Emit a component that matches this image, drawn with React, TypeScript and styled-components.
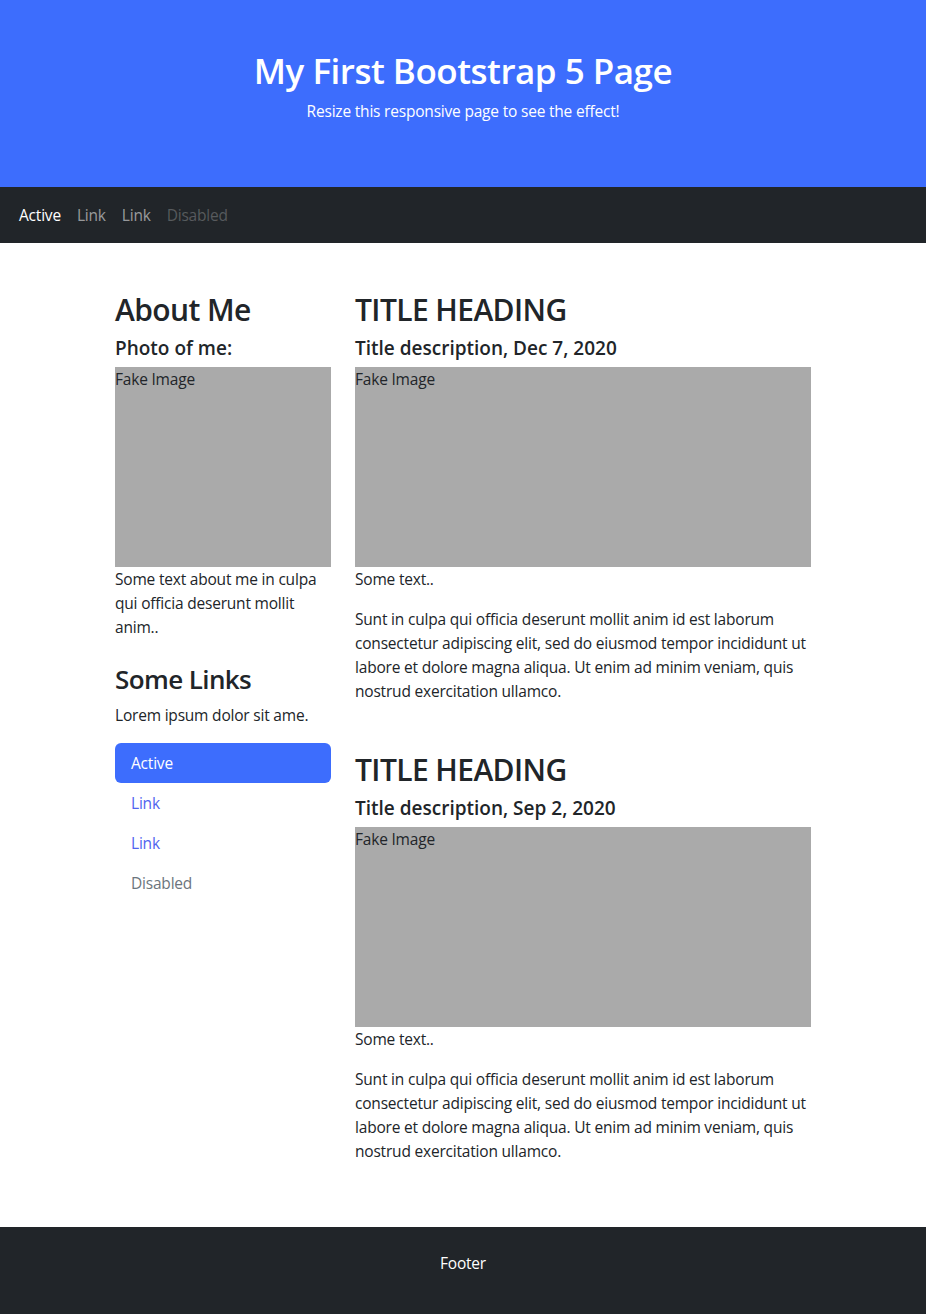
import React from "react";
import styled, { createGlobalStyle } from "styled-components";

const FONT = `"Open Sans", "Noto Sans", "Liberation Sans", sans-serif`;

const GlobalStyle = createGlobalStyle`
  *, *::before, *::after { box-sizing: border-box; }
  body {
    margin: 0;
    font-family: ${FONT};
    font-size: 15.5px;
    letter-spacing: -0.2px;
    line-height: 24px;
    color: #212529;
    background: #fff;
  }
`;

const Hero = styled.header`
  background: #3d6dfd;
  color: #fff;
  text-align: center;
  padding: 47px 48px 50px;
`;

const HeroTitle = styled.h1`
  margin: 0 0 4px;
  font-size: 35px;
  font-weight: 600;
  letter-spacing: -0.5px;
  line-height: 48px;
`;

const HeroText = styled.p`
  margin: 0 0 14px;
`;

const NavBar = styled.nav`
  background: #212529;
  height: 56px;
  display: flex;
  align-items: center;
  padding: 0 11px;
`;

const NavLink = styled.a<{ $state?: "active" | "disabled" }>`
  padding: 8px 8px;
  color: ${(p) =>
    p.$state === "active"
      ? "#fff"
      : p.$state === "disabled"
      ? "rgba(255,255,255,0.25)"
      : "rgba(255,255,255,0.55)"};
  text-decoration: none;
`;

const Container = styled.main`
  width: 720px;
  margin: 48px auto 0;
  padding: 0 12px;
  display: grid;
  grid-template-columns: 216px 456px;
  column-gap: 24px;
`;

const Column = styled.div`
  display: flex;
  flex-direction: column;
`;

const H2 = styled.h2<{ $mt?: number }>`
  margin: ${(p) => p.$mt ?? 0}px 0 7px;
  font-size: 30px;
  font-weight: 600;
  letter-spacing: -0.6px;
  line-height: 38px;
`;

const H3 = styled.h3`
  margin: 7px 0 7px;
  font-size: 26px;
  font-weight: 600;
  letter-spacing: -0.6px;
  line-height: 34px;
`;

const H5 = styled.h5`
  margin: 0 0 7px;
  font-size: 19px;
  font-weight: 600;
  letter-spacing: 0;
  line-height: 24px;
`;

const FakeImg = styled.div`
  height: 200px;
  background: #aaa;
`;

const P = styled.p`
  margin: 0 0 16px;
`;

const Pills = styled.ul`
  list-style: none;
  margin: 0;
  padding: 0;
  display: flex;
  flex-direction: column;
`;

const Pill = styled.a<{ $state?: "active" | "disabled" }>`
  display: block;
  padding: 8px 16px;
  border-radius: 6px;
  text-decoration: none;
  background: ${(p) => (p.$state === "active" ? "#3d6dfd" : "transparent")};
  color: ${(p) =>
    p.$state === "active" ? "#fff" : p.$state === "disabled" ? "#6c757d" : "#5164ef"};
`;

const Footer = styled.footer`
  margin-top: 48px;
  padding: 24px;
  background: #212529;
  color: #fff;
  text-align: center;
  & > p { margin: 0 0 16px; }
`;

const posts = [
  { date: "Dec 7, 2020", mt: 0 },
  { date: "Sep 2, 2020", mt: 32 },
];

export default function App() {
  return (
    <>
      <GlobalStyle />
      <Hero>
        <HeroTitle>My First Bootstrap 5 Page</HeroTitle>
        <HeroText>Resize this responsive page to see the effect!</HeroText>
      </Hero>
      <NavBar>
        <NavLink $state="active" href="#">Active</NavLink>
        <NavLink href="#">Link</NavLink>
        <NavLink href="#">Link</NavLink>
        <NavLink $state="disabled">Disabled</NavLink>
      </NavBar>
      <Container>
        <Column>
          <H2>About Me</H2>
          <H5>Photo of me:</H5>
          <FakeImg>Fake Image</FakeImg>
          <P>Some text about me in culpa qui officia deserunt mollit anim..</P>
          <H3>Some Links</H3>
          <P>Lorem ipsum dolor sit ame.</P>
          <Pills>
            <li><Pill $state="active" href="#">Active</Pill></li>
            <li><Pill href="#">Link</Pill></li>
            <li><Pill href="#">Link</Pill></li>
            <li><Pill $state="disabled">Disabled</Pill></li>
          </Pills>
        </Column>
        <Column>
          {posts.map((post) => (
            <React.Fragment key={post.date}>
              <H2 $mt={post.mt}>TITLE HEADING</H2>
              <H5>Title description, {post.date}</H5>
              <FakeImg>Fake Image</FakeImg>
              <P>Some text..</P>
              <P>
                Sunt in culpa qui officia deserunt mollit anim id est laborum consectetur
                adipiscing elit, sed do eiusmod tempor incididunt ut labore et dolore magna
                aliqua. Ut enim ad minim veniam, quis nostrud exercitation ullamco.
              </P>
            </React.Fragment>
          ))}
        </Column>
      </Container>
      <Footer>
        <p>Footer</p>
      </Footer>
    </>
  );
}
